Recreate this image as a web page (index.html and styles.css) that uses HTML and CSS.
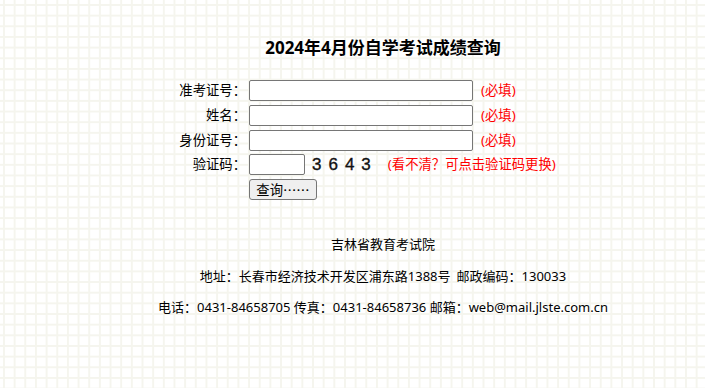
FILE: index.html
```html
<!DOCTYPE html>
<html lang="zh-CN">
<head>
<meta charset="utf-8">
<title>2024年4月份自学考试成绩查询</title>
<link rel="stylesheet" href="styles.css">
</head>
<body>
<main class="page">
  <h1 class="title">2024年4月份自学考试成绩查询</h1>
  <form class="query">
    <label class="label" for="zkz">准考证号：</label>
    <div class="field"><input class="text" id="zkz" type="text"><span class="req">(必填)</span></div>
    <label class="label" for="xm">姓名：</label>
    <div class="field"><input class="text" id="xm" type="text"><span class="req">(必填)</span></div>
    <label class="label" for="sfz">身份证号：</label>
    <div class="field"><input class="text" id="sfz" type="text"><span class="req">(必填)</span></div>
    <label class="label" for="yzm">验证码：</label>
    <div class="field"><input class="code" id="yzm" type="text"><span class="captcha">3643</span><span class="req hint">(看不清？可点击验证码更换)</span></div>
    <span class="label"></span>
    <div class="field"><button class="btn" type="button">查询……</button></div>
  </form>
  <footer class="foot">
    <p>吉林省教育考试院</p>
    <p>地址：长春市经济技术开发区浦东路1388号<span class="sep"></span>邮政编码：130033</p>
    <p>电话：0431-84658705 传真：0431-84658736 邮箱：web@mail.jlste.com.cn</p>
  </footer>
</main>
</body>
</html>
```
FILE: styles.css
```css
html, body {
  margin: 0;
  padding: 0;
}
body {
  font-family: "Noto Sans", "Noto Sans CJK SC", sans-serif;
  font-size: 13px;
  color: #000;
  background-color: #fff;
  background-image:
    linear-gradient(to right, #f5f5ee 2px, transparent 2px),
    linear-gradient(to bottom, #f5f5ee 2px, transparent 2px);
  background-size: 10.667px 10.667px;
  background-position: 3px 4px;
  min-height: 388px;
}
.page {
  padding: 36px 0 0 61px;
}
.title {
  margin: 0;
  font-size: 17px;
  line-height: 24px;
  font-weight: bold;
  text-align: center;
}
.query {
  margin: 20px 0 0 114px;
  display: grid;
  grid-template-columns: 71px 1fr;
  column-gap: 3px;
  row-gap: 3.75px;
}
.label {
  text-align: right;
  line-height: 21px;
  font-size: 13.33px;
}
.field {
  display: flex;
  align-items: center;
  height: 21px;
}
.text, .code {
  box-sizing: border-box;
  height: 21px;
  border: 1px solid #767676;
  border-radius: 2px;
  background: #fff;
  padding: 1px 2px;
  margin: 0;
  font-size: 13.33px;
}
.text {
  width: 224px;
}
.code {
  width: 56px;
}
.req {
  color: #ff0000;
  margin-left: 8px;
  font-size: 13.33px;
  line-height: 21px;
}
.captcha {
  margin-left: 7px;
  font-family: "Liberation Sans", sans-serif;
  font-weight: normal;
  -webkit-text-stroke: 0.35px #111;
  font-size: 17px;
  letter-spacing: 7px;
  line-height: 21px;
  color: #111;
}
.hint {
  margin-left: 10px;
}
.btn {
  box-sizing: border-box;
  height: 21px;
  width: 68px;
  padding: 0 4px;
  margin: 0;
  border: 1px solid #767676;
  border-radius: 3px;
  background: #efefef;
  font-family: "Noto Sans CJK SC", sans-serif;
  font-size: 13.33px;
  line-height: 19px;
  color: #000;
  white-space: nowrap;
}
.foot {
  margin-top: 34px;
  display: flex;
  flex-direction: column;
  gap: 11.5px;
  text-align: center;
}
.foot p {
  margin: 0;
  line-height: 20px;
}
.sep {
  display: inline-block;
  width: 6px;
}
```
